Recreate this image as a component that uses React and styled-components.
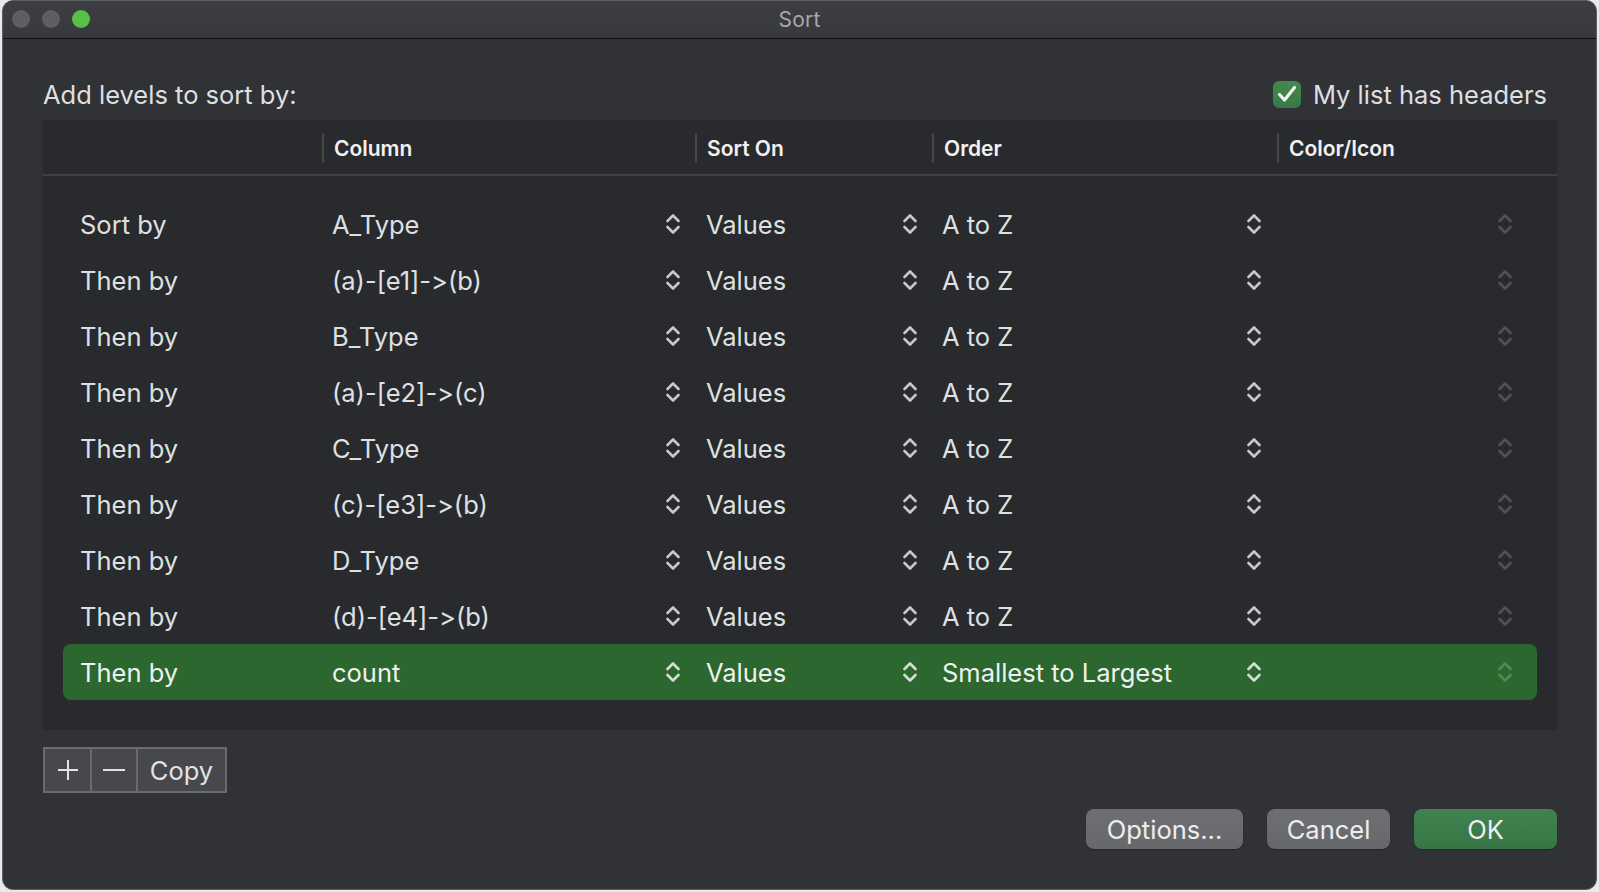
import React from "react";
import styled, { createGlobalStyle } from "styled-components";

const Global = createGlobalStyle`
  html, body { margin: 0; padding: 0; background: #e9e9e9; }
  body {
    font-family: Inter, "Noto Sans", sans-serif;
    font-feature-settings: "calt" 0, "liga" 0;
    -webkit-font-smoothing: antialiased;
  }
  button { font-feature-settings: "calt" 0, "liga" 0; }
  * { box-sizing: border-box; }
`;

const Page = styled.div`
  padding: 0 2px 2px 2px;
`;

const Window = styled.div`
  width: 1595px;
  height: 890px;
  background: #303236;
  border: 1px solid #5d5e61;
  border-radius: 11px;
  overflow: hidden;
  display: flex;
  flex-direction: column;
`;

const TitleBar = styled.div`
  height: 38px;
  flex: none;
  background: linear-gradient(#3d3e42, #38393d);
  border-bottom: 1px solid #0d0d0f;
  display: grid;
  grid-template-columns: 1fr auto 1fr;
  align-items: center;
  padding: 0 9px 1px 9px;
`;

const Lights = styled.div`
  display: flex;
  gap: 12px;
`;

const Light = styled.span`
  width: 18px;
  height: 18px;
  border-radius: 50%;
  background: ${(p) => p.$color};
`;

const Title = styled.div`
  color: #a7a8ab;
  font-size: 21px;
  letter-spacing: 0.2px;
`;

const Body = styled.div`
  flex: 1;
  padding: 38px 39px 0 40px;
  display: flex;
  flex-direction: column;
`;

const TopRow = styled.div`
  height: 34px;
  display: flex;
  align-items: center;
  justify-content: space-between;
  padding-right: 10px;
  margin-bottom: 9px;
`;

const Label = styled.div`
  color: #dedfe1;
  font-size: 25.5px;
`;

const CheckWrap = styled.label`
  display: flex;
  align-items: center;
  gap: 12px;
  color: #dedfe1;
  font-size: 25.5px;
`;

const CheckBox = styled.span`
  width: 28px;
  height: 27px;
  border-radius: 6px;
  background: linear-gradient(#428a4f, #3a7845);
  display: flex;
  align-items: center;
  justify-content: center;
`;

const Table = styled.div`
  background: #282a2e;
  height: 610px;
  display: flex;
  flex-direction: column;
`;

const HeaderRow = styled.div`
  height: 56px;
  flex: none;
  display: grid;
  grid-template-columns: 279px 373px 237px 345px 1fr;
  align-items: center;
  padding-top: 2px;
  border-bottom: 2px solid #3f4145;
`;

const HeaderCell = styled.div`
  height: 30px;
  display: flex;
  align-items: center;
  padding-left: 10px;
  border-left: ${(p) => (p.$sep ? "2px solid #45474b" : "none")};
  color: #f1f1f2;
  font-size: 21px;
  font-weight: 600;
`;

const Rows = styled.div`
  padding: 20px 20px 0 20px;
  display: flex;
  flex-direction: column;
`;

const Row = styled.div`
  height: 56px;
  display: grid;
  grid-template-columns: 252px 374px 236px 345px 1fr;
  align-items: center;
  padding-left: 17px;
  border-radius: 8px;
  background: ${(p) => (p.$selected ? "#2c672f" : "transparent")};
  color: ${(p) => (p.$selected ? "#eef2ee" : "#dfe0e2")};
  font-size: 25.5px;
`;

const Cell = styled.div`
  display: flex;
  align-items: center;
  justify-content: space-between;
  padding-right: ${(p) => p.$pr || 0}px;
  white-space: nowrap;
`;

const Stepper = ({ color }) => (
  <svg width="14" height="22" viewBox="0 0 14 22" fill="none">
    <path d="M1.5 8 L7 2.5 L12.5 8" stroke={color} strokeWidth="2.6" strokeLinecap="round" strokeLinejoin="round" />
    <path d="M1.5 14 L7 19.5 L12.5 14" stroke={color} strokeWidth="2.6" strokeLinecap="round" strokeLinejoin="round" />
  </svg>
);

const Footer = styled.div`
  display: flex;
  flex-direction: column;
`;

const Segmented = styled.div`
  margin-top: 17px;
  display: flex;
  align-self: flex-start;
  height: 46px;
  border: 2px solid #6a6b6e;
  background: #46484b;
`;

const Seg = styled.button`
  height: 100%;
  width: ${(p) => p.$w}px;
  padding: 0;
  border: none;
  border-left: ${(p) => (p.$first ? "none" : "2px solid #6a6b6e")};
  background: transparent;
  color: #e2e3e5;
  font-family: Inter, sans-serif;
  font-size: 25.5px;
  display: flex;
  align-items: center;
  justify-content: center;
`;

const Actions = styled.div`
  margin-top: 16px;
  display: flex;
  justify-content: flex-end;
  gap: 24px;
`;

const Button = styled.button`
  height: 40px;
  width: ${(p) => p.$w}px;
  border: none;
  border-radius: 8px;
  background: ${(p) => (p.$primary ? "linear-gradient(#3f8350, #387545)" : "linear-gradient(#6e6f73, #67686c)")};
  color: #eeeeef;
  font-family: Inter, sans-serif;
  font-size: 25.5px;
  display: flex;
  align-items: center;
  justify-content: center;
  box-shadow: 0 1px 1px rgba(0, 0, 0, 0.25);
`;

const rows = [
  ["Sort by", "A_Type", "Values", "A to Z"],
  ["Then by", "(a)-[e1]->(b)", "Values", "A to Z"],
  ["Then by", "B_Type", "Values", "A to Z"],
  ["Then by", "(a)-[e2]->(c)", "Values", "A to Z"],
  ["Then by", "C_Type", "Values", "A to Z"],
  ["Then by", "(c)-[e3]->(b)", "Values", "A to Z"],
  ["Then by", "D_Type", "Values", "A to Z"],
  ["Then by", "(d)-[e4]->(b)", "Values", "A to Z"],
  ["Then by", "count", "Values", "Smallest to Largest"],
];

export default function App() {
  return (
    <Page>
      <Global />
      <Window>
        <TitleBar>
          <Lights>
            <Light $color="#5e5f63" />
            <Light $color="#5e5f63" />
            <Light $color="#58c047" />
          </Lights>
          <Title>Sort</Title>
          <div />
        </TitleBar>
        <Body>
          <TopRow>
            <Label>Add levels to sort by:</Label>
            <CheckWrap>
              <CheckBox>
                <svg width="20" height="18" viewBox="0 0 20 18" fill="none">
                  <path d="M2.5 9.5 L7.5 15 L17.5 2.5" stroke="#eef3ee" strokeWidth="3.2" strokeLinecap="round" strokeLinejoin="round" />
                </svg>
              </CheckBox>
              My list has headers
            </CheckWrap>
          </TopRow>
          <Table>
            <HeaderRow>
              <HeaderCell />
              <HeaderCell $sep>Column</HeaderCell>
              <HeaderCell $sep>Sort On</HeaderCell>
              <HeaderCell $sep>Order</HeaderCell>
              <HeaderCell $sep>Color/Icon</HeaderCell>
            </HeaderRow>
            <Rows>
              {rows.map((r, i) => {
                const sel = i === rows.length - 1;
                const c = sel ? "#d4ddd4" : "#c6c7c9";
                return (
                  <Row key={i} $selected={sel}>
                    <Cell>{r[0]}</Cell>
                    <Cell $pr={26}>
                      {r[1]}
                      <Stepper color={c} />
                    </Cell>
                    <Cell $pr={25}>
                      {r[2]}
                      <Stepper color={c} />
                    </Cell>
                    <Cell $pr={26}>
                      {r[3]}
                      <Stepper color={c} />
                    </Cell>
                    <Cell $pr={25}>
                      <span />
                      <Stepper color={sel ? "#4f8a52" : "#4f5154"} />
                    </Cell>
                  </Row>
                );
              })}
            </Rows>
          </Table>
          <Footer>
            <Segmented>
              <Seg $first $w={45}>
                <svg width="22" height="22" viewBox="0 0 22 22">
                  <path d="M11 1 V21 M1 11 H21" stroke="#e2e3e5" strokeWidth="2" />
                </svg>
              </Seg>
              <Seg $w={46}>
                <svg width="22" height="22" viewBox="0 0 22 22">
                  <path d="M0 11 H22" stroke="#e2e3e5" strokeWidth="2" />
                </svg>
              </Seg>
              <Seg $w={89}>Copy</Seg>
            </Segmented>
            <Actions>
              <Button $w={157}>Options...</Button>
              <Button $w={123}>Cancel</Button>
              <Button $w={143} $primary>OK</Button>
            </Actions>
          </Footer>
        </Body>
      </Window>
    </Page>
  );
}
